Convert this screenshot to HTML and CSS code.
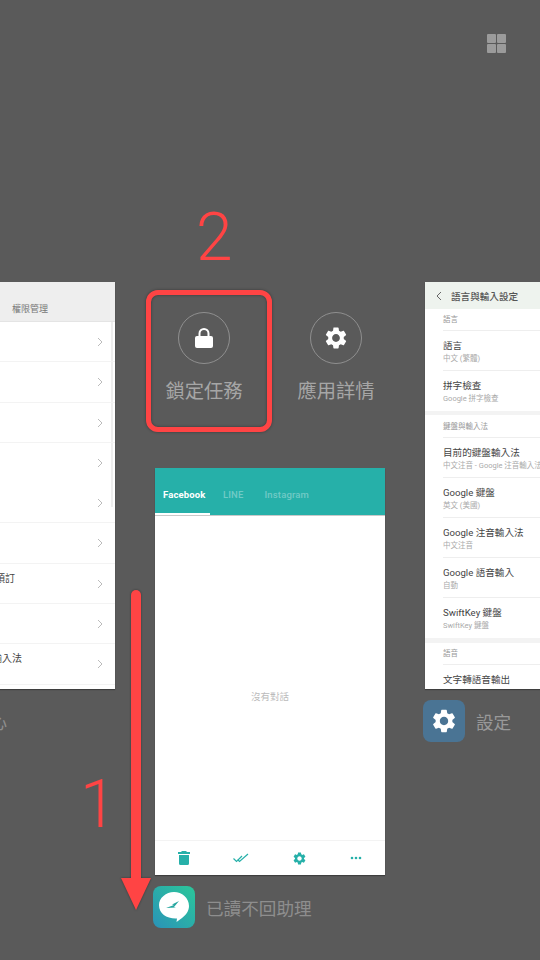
FILE: index.html
```html
<!DOCTYPE html>
<html lang="zh-Hant">
<head>
  <meta charset="UTF-8">
  <title>多工畫面</title>
  <link rel="stylesheet" href="styles.css">
</head>
<body>
  <svg class="defs" width="0" height="0">
    <symbol id="gear" viewBox="0 0 24 24">
      <path d="M19.14 12.94c.04-.3.06-.61.06-.94 0-.32-.02-.64-.07-.94l2.03-1.58a.49.49 0 0 0 .12-.61l-1.92-3.32a.488.488 0 0 0-.59-.22l-2.39.96c-.5-.38-1.03-.7-1.62-.94l-.36-2.54a.484.484 0 0 0-.48-.41h-3.84c-.24 0-.43.17-.47.41l-.36 2.54c-.59.24-1.13.57-1.62.94l-2.39-.96c-.22-.08-.47 0-.59.22L2.74 8.87c-.12.21-.08.47.12.61l2.03 1.58c-.05.3-.09.63-.09.94s.02.64.07.94l-2.03 1.58a.49.49 0 0 0-.12.61l1.92 3.32c.12.22.37.29.59.22l2.39-.96c.5.38 1.03.7 1.62.94l.36 2.54c.05.24.24.41.48.41h3.84c.24 0 .44-.17.47-.41l.36-2.54c.59-.24 1.13-.56 1.62-.94l2.39.96c.22.08.47 0 .59-.22l1.92-3.32c.12-.22.07-.47-.12-.61l-2.01-1.58zM12 15.6c-1.98 0-3.6-1.62-3.6-3.6s1.62-3.6 3.6-3.6 3.6 1.62 3.6 3.6-1.62 3.6-3.6 3.6z"/>
    </symbol>
    <symbol id="chev" viewBox="0 0 6 10">
      <path d="M1 1l4 4-4 4" fill="none" stroke="currentColor" stroke-width="1"/>
    </symbol>
  </svg>

  <div class="stage">
    <div class="grid-btn"><i></i><i></i><i></i><i></i></div>

    <!-- 左邊的卡片 -->
    <div class="card card-left">
      <div class="perm-head"><span>權限管理</span></div>
      <div class="perm-bar"></div>
      <div class="perm-row"><span></span><svg class="chev"><use href="#chev"/></svg></div>
      <div class="perm-row"><span></span><svg class="chev"><use href="#chev"/></svg></div>
      <div class="perm-row"><span></span><svg class="chev"><use href="#chev"/></svg></div>
      <div class="perm-row no-line"><span></span><svg class="chev"><use href="#chev"/></svg></div>
      <div class="perm-row"><span></span><svg class="chev"><use href="#chev"/></svg></div>
      <div class="perm-row"><span></span><svg class="chev"><use href="#chev"/></svg></div>
      <div class="perm-row"><span class="cut-a">預訂</span><svg class="chev"><use href="#chev"/></svg></div>
      <div class="perm-row"><span></span><svg class="chev"><use href="#chev"/></svg></div>
      <div class="perm-row"><span class="cut-b">輸入法</span><svg class="chev"><use href="#chev"/></svg></div>
    </div>
    <div class="app-label left-label">安全中心</div>

    <!-- 動作按鈕 -->
    <div class="action lock-action">
      <div class="action-circle">
        <svg width="20" height="22" viewBox="0 0 20 22"><path d="M5.5 10V6.5a4.5 4.5 0 0 1 9 0V10" fill="none" stroke="#fff" stroke-width="2"/><rect x="1" y="9" width="18" height="12" rx="2" fill="#fff"/></svg>
      </div>
      <div class="action-text">鎖定任務</div>
    </div>
    <div class="action info-action">
      <div class="action-circle">
        <svg class="gear-white" width="26" height="26"><use href="#gear"/></svg>
      </div>
      <div class="action-text">應用詳情</div>
    </div>

    <!-- 中間的卡片 -->
    <div class="card card-main">
      <div class="main-head">
        <div class="tab active">Facebook</div>
        <div class="tab tab-line">LINE</div>
        <div class="tab tab-ig">Instagram</div>
      </div>
      <div class="main-body">沒有對話</div>
      <div class="main-foot">
        <svg width="12" height="14" viewBox="0 0 12 14"><path d="M4 0h4l1 1h3v2H0V1h3zM1 4h10v8.5A1.5 1.5 0 0 1 9.5 14h-7A1.500 1.500 0 0 1 1 12.500z" fill="#26b0a9"/></svg>
        <svg width="16" height="10" viewBox="0 0 16 10"><path d="M0.500 5.500L3.500 8.500 9 3M4.500 6.500L6.500 8.500 15 1" fill="none" stroke="#26b0a9" stroke-width="1.200"/></svg>
        <svg class="gear-teal" width="15" height="15"><use href="#gear"/></svg>
        <svg width="12" height="4" viewBox="0 0 12 4"><circle cx="2" cy="2" r="1.300" fill="#26b0a9"/><circle cx="6" cy="2" r="1.300" fill="#26b0a9"/><circle cx="10" cy="2" r="1.300" fill="#26b0a9"/></svg>
      </div>
    </div>
    <div class="app-label main-label">
      <div class="app-icon bubble-icon">
        <svg width="34" height="34" viewBox="0 0 34 34"><path d="M17 2c8 0 15 6 15 14 0 5-3 9-7 12l-5.500 4 .5-3.500C10 29 2 24 2 15 2 8 9 2 17 2z" fill="#fff"/><path d="M9 18l8-3-2-.5 7-3.500-5 6 2 .5z" fill="#26a6a0"/></svg>
      </div>
      <span>已讀不回助理</span>
    </div>

    <!-- 右邊的卡片 -->
    <div class="card card-right">
      <div class="set-head"><svg class="back" viewBox="0 0 6 10"><path d="M5 1L1 5l4 4" fill="none" stroke="#666" stroke-width="1"/></svg>語言與輸入設定</div>
      <div class="set-section">語言</div>
      <div class="set-row"><b>語言</b><small>中文 (繁體)</small></div>
      <div class="set-row last"><b>拼字檢查</b><small>Google 拼字檢查</small></div>
      <div class="set-band"></div>
      <div class="set-section tall">鍵盤與輸入法</div>
      <div class="set-row"><b>目前的鍵盤輸入法</b><small>中文注音 - Google 注音輸入法</small></div>
      <div class="set-row"><b>Google 鍵盤</b><small>英文 (美國)</small></div>
      <div class="set-row"><b>Google 注音輸入法</b><small>中文注音</small></div>
      <div class="set-row"><b>Google 語音輸入</b><small>自動</small></div>
      <div class="set-row last"><b>SwiftKey 鍵盤</b><small>SwiftKey 鍵盤</small></div>
      <div class="set-band wide"></div>
      <div class="set-section">語音</div>
      <div class="set-row"><b>文字轉語音輸出</b></div>
    </div>
    <div class="app-label right-label">
      <div class="app-icon settings-icon">
        <svg class="gear-white" width="28" height="28"><use href="#gear"/></svg>
      </div>
      <span>設定</span>
    </div>

    <!-- 紅色標註 -->
    <div class="mark-box"></div>
    <div class="mark-num num-two">2</div>
    <div class="mark-num num-one">1</div>
    <svg class="mark-arrow" width="32" height="322" viewBox="0 0 32 322">
      <path d="M16 5V292" stroke="#ff4444" stroke-width="10" stroke-linecap="round"/>
      <path d="M1 288H31L16 320z" fill="#ff4444"/>
    </svg>
  </div>
</body>
</html>
```

FILE: styles.css
```css
* {
  box-sizing: border-box;
  margin: 0;
  padding: 0;
}

body {
  width: 540px;
  height: 960px;
  overflow: hidden;
  background: #5a5a5a;
  font-family: Roboto, 'Noto Sans CJK TC', sans-serif;
}

.defs {
  position: absolute;
}

.stage {
  position: relative;
  width: 540px;
  height: 960px;
  overflow: hidden;
}

/* 右上角按鈕 */
.grid-btn {
  position: absolute;
  left: 487px;
  top: 34px;
  display: grid;
  grid-template-columns: 9px 9px;
  grid-auto-rows: 9px;
  gap: 1px;
}

.grid-btn i {
  background: #9b9b9b;
  border-radius: 1px;
}

/* 卡片 */
.card {
  position: absolute;
  top: 282px;
  height: 407px;
  background: #fff;
  overflow: hidden;
  box-shadow: 0 1px 1px rgba(0,0,0,0.3);
}

.card-left {
  left: -115px;
  width: 230px;
}

.card-main {
  left: 155px;
  top: 468px;
  width: 230px;
  display: flex;
  flex-direction: column;
}

.card-right {
  left: 425px;
  width: 230px;
}

/* 左邊的卡片 */
.perm-head {
  height: 40px;
  padding: 19px 0 0 127px;
  background: #eeeeee;
  border-bottom: 1px solid #e4e4e4;
  font-size: 9px;
  line-height: 16px;
  color: #777;
}

.perm-bar {
  position: absolute;
  left: 226px;
  top: 40px;
  width: 2px;
  height: 185px;
  background: #eee;
}

.perm-row {
  position: relative;
  height: 40.300px;
  border-bottom: 1px solid #f3f3f3;
  font-size: 10px;
  color: #444;
}

.perm-row.no-line {
  border-bottom-color: transparent;
}

.perm-row span {
  position: absolute;
  top: 6px;
  left: 110px;
}

.perm-row .cut-a {
  left: 110px;
}

.perm-row .cut-b {
  left: 107px;
}

.chev {
  position: absolute;
  left: 212px;
  top: 15px;
  width: 6px;
  height: 10px;
  color: #bbb;
}

/* 動作按鈕 */
.action {
  position: absolute;
  top: 312px;
  width: 90px;
  display: flex;
  flex-direction: column;
  align-items: center;
}

.lock-action {
  left: 159px;
}

.info-action {
  left: 291px;
}

.action-circle {
  width: 52px;
  height: 52px;
  border: 1px solid #8f8f8f;
  border-radius: 50%;
  display: flex;
  align-items: center;
  justify-content: center;
}

.action-text {
  margin-top: 13px;
  font-size: 19.300px;
  line-height: 30px;
  color: #a6a6a6;
  white-space: nowrap;
}

.gear-white {
  fill: #fff;
}

.gear-teal {
  fill: #26b0a9;
}

/* 中間的卡片 */
.main-head {
  height: 48px;
  display: flex;
  align-items: flex-end;
  background: #26b0a9;
  border-bottom: 1px solid #c9c9c9;
}

.tab {
  height: 35px;
  padding: 7px 8px 0;
  font-size: 9.500px;
  line-height: 16px;
  font-weight: 500;
  letter-spacing: 0.150px;
  color: rgba(255,255,255,0.35);
}

.tab.active {
  width: 55px;
  color: #fff;
  font-weight: 700;
  border-bottom: 2px solid #fff;
}

.tab-line {
  margin-left: 5px;
}

.tab-ig {
  margin-left: 5px;
}

.main-body {
  flex: 1;
  display: flex;
  align-items: center;
  justify-content: center;
  font-size: 9.500px;
  color: #bbb;
  padding-top: 36px;
}

.main-foot {
  height: 35px;
  display: flex;
  align-items: center;
  justify-content: space-between;
  padding: 0 23px;
  border-top: 1px solid #f3f3f3;
}

/* 圖示與名稱 */
.app-label {
  position: absolute;
  display: flex;
  align-items: center;
  gap: 11px;
  font-size: 17.600px;
  color: #8e8e8e;
  white-space: nowrap;
}

.left-label {
  right: 533px;
  top: 709px;
}

.main-label {
  left: 153px;
  top: 886px;
}

.right-label {
  left: 423px;
  top: 700px;
  color: #999;
}

.app-icon {
  width: 42px;
  height: 42px;
  border-radius: 8px;
  display: flex;
  align-items: center;
  justify-content: center;
}

.bubble-icon {
  background: linear-gradient(45deg, #2a93b8, #2bc79a);
}

.settings-icon {
  background: #4a7494;
}

/* 右邊的卡片 */
.set-head {
  height: 27px;
  display: flex;
  align-items: center;
  padding-left: 26px;
  position: relative;
  background: #eef3ee;
  font-size: 9.600px;
  font-weight: 500;
  color: #555;
}

.back {
  position: absolute;
  left: 11px;
  top: 9px;
  width: 6px;
  height: 10px;
}

.set-section {
  height: 22px;
  margin-left: 18px;
  padding-top: 5px;
  border-bottom: 1px solid #eee;
  font-size: 7.500px;
  line-height: 11px;
  color: #999;
}

.set-section.tall {
  height: 23px;
  padding-top: 6px;
}

.set-row {
  height: 40px;
  margin-left: 18px;
  padding-top: 8px;
  border-bottom: 1px solid #eee;
  white-space: nowrap;
}

.set-row.last {
  border-bottom: none;
}

.set-row b {
  display: block;
  font-size: 9.600px;
  line-height: 14px;
  font-weight: 400;
  color: #444;
}

.set-row small {
  display: block;
  font-size: 7.500px;
  line-height: 11px;
  color: #aaa;
}

.set-band {
  height: 4px;
  background: #f3f3f3;
}

.set-band.wide {
  height: 5px;
}

/* 紅色標註 */
.mark-box {
  position: absolute;
  left: 146px;
  top: 290px;
  width: 126px;
  height: 142px;
  border: 5px solid #ff4444;
  border-radius: 12px;
  box-shadow: 0 0 3px rgba(0,0,0,0.4), inset 0 0 3px rgba(0,0,0,0.4);
}

.mark-num {
  position: absolute;
  font-family: Roboto, sans-serif;
  font-weight: 300;
  font-size: 66px;
  line-height: 66px;
  color: #ff4444;
}

.num-two {
  left: 196px;
  top: 205px;
}

.num-one {
  left: 80px;
  top: 772px;
}

.mark-arrow {
  position: absolute;
  left: 120px;
  top: 590px;
  filter: drop-shadow(0 0 1px rgba(0,0,0,0.4));
}
```
